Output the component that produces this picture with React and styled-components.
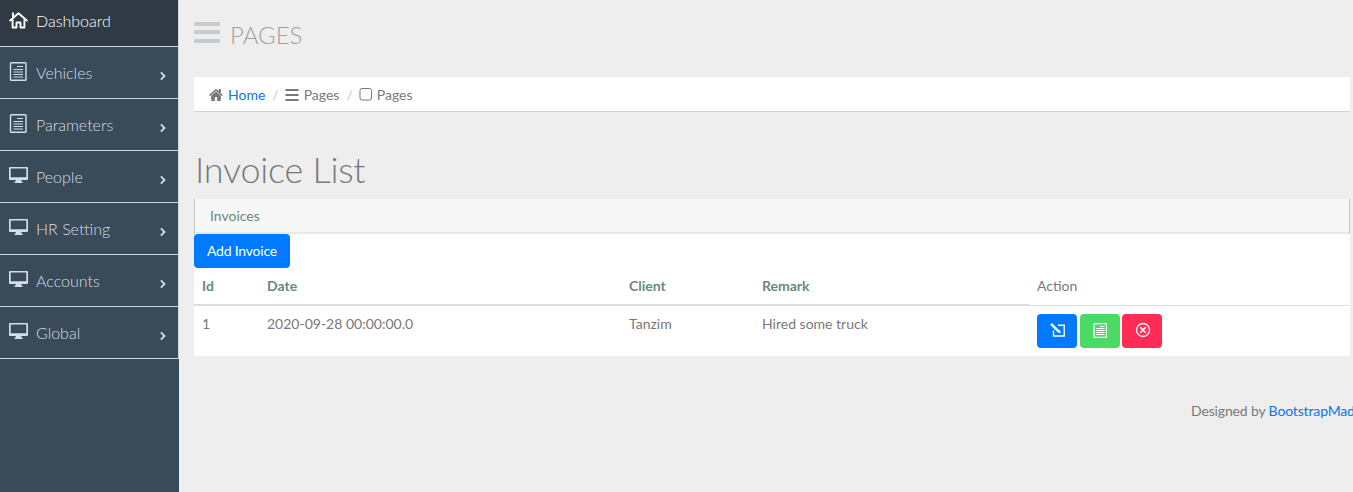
import React from "react";
import styled, { createGlobalStyle } from "styled-components";

const GlobalStyle = createGlobalStyle`
  *, *::before, *::after { box-sizing: border-box; }
  html, body { margin: 0; height: 100%; overflow: hidden; }
  body {
    background: #eeeeee;
    color: #797979;
    font: 400 14px/21px Lato, "Liberation Sans", sans-serif;
  }
  svg { display: block; flex: none; }
`;

const Page = styled.div`
  display: flex;
  width: 1353px;
  height: 492px;
  overflow: hidden;
`;

const Sidebar = styled.nav`
  flex: none;
  width: 179px;
  background: #394a59;
`;

const Menu = styled.ul`
  list-style: none;
  margin: 0;
  padding: 0;
  border-right: 1px solid #d7d7d7;
`;

const MenuItem = styled.li`
  display: flex;
  align-items: center;
  height: ${(p) => (p.$active ? 47 : 52)}px;
  padding: 0 11px ${(p) => (p.$active ? 5 : 0)}px 9px;
  border-bottom: 1px solid #d7d7d7;
  background: ${(p) => (p.$active ? "#2f3a45" : "transparent")};
  color: ${(p) => (p.$active ? "#ffffff" : "#d3dee8")};
  font-size: 16px;
  font-weight: 300;
`;

const MenuIcon = styled.span`
  width: 27px;
  padding-bottom: ${(p) => (p.$active ? 1 : 3)}px;
`;

const MenuArrow = styled.span`
  margin-left: auto;
  padding-top: 7px;
`;

const Main = styled.main`
  flex: none;
  width: 1171px;
  padding: 0 0 0 15px;
`;

const PageHeader = styled.h3`
  display: flex;
  align-items: flex-start;
  gap: 10px;
  height: 77px;
  margin: 0;
  padding-top: 20px;
  color: #a0a0a0;
  font-size: 24px;
  line-height: 30px;
  font-weight: 300;
`;

const Bars = styled.svg`
  margin-top: 2px;
`;

const Breadcrumb = styled.ol`
  display: flex;
  align-items: center;
  height: 35px;
  margin: 0;
  padding: 1px 15px 0;
  list-style: none;
  background: #ffffff;
  border-bottom: 1px solid #d2d2d2;
`;

const Crumb = styled.li`
  display: flex;
  align-items: center;
  gap: 5px;

  & + &::before {
    content: "/";
    margin: 0 1px 0 7px;
    color: #c8c8c8;
  }
`;

const Link = styled.a`
  color: #0f74e6;
  text-decoration: none;
`;

const Title = styled.h1`
  margin: 35px 0 8px;
  height: 44px;
  padding-left: 1px;
  color: #797979;
  font-size: 36px;
  line-height: 44px;
  font-weight: 300;
  letter-spacing: -0.25px;
`;

const Panel = styled.section`
  height: 157px;
  background: #ffffff;
`;

const PanelHeading = styled.header`
  height: 35px;
  padding: 6px 15px 0;
  color: #688a7e;
  background: #f7f7f7;
  border: solid #c7cbd0;
  border-width: 0 1px;
  box-shadow: inset 0 -2px 0 #e9e9e9;
`;

const AddButton = styled.button`
  display: block;
  width: 96px;
  height: 34px;
  padding: 0 0 2px;
  border: 0;
  border-radius: 4px;
  background: #007aff;
  color: #ffffff;
  font: inherit;
  letter-spacing: -0.2px;
`;

const Table = styled.table`
  width: 1156px;
  table-layout: fixed;
  border-collapse: separate;
  border-spacing: 0;
`;

const HeadCell = styled.th`
  height: 38px;
  padding: 0 8px 1px;
  border-bottom: 2px solid #dddddd;
  color: #688a7e;
  text-align: left;
  font-weight: 700;
`;

const ActionHead = styled.td`
  height: 38px;
  padding: 0 8px 2px;
  border-bottom: 1px solid #dddddd;
`;

const Cell = styled.td`
  height: 50px;
  padding: ${(p) => (p.$actions ? 8 : 7)}px 8px 0;
  vertical-align: top;
`;

const Actions = styled.div`
  display: flex;
  gap: 2.5px;
`;

const ActionButton = styled.button`
  display: flex;
  align-items: center;
  justify-content: center;
  width: 40px;
  height: 34px;
  padding: 0 0 2px 1px;
  border: 0;
  border-radius: 4px;
  background: ${(p) => p.$color};
  color: #ffffff;
`;

const Footer = styled.footer`
  width: 210px;
  margin: 44px 0 0 997px;
  white-space: nowrap;
  letter-spacing: -0.15px;
`;

const HouseIcon = () => (
  <svg width="19" height="18" viewBox="0 0 19 18" fill="none" stroke="currentColor" strokeWidth="1.9" strokeLinejoin="round" strokeLinecap="round">
    <path d="M1.2 9.5 9.5 2.2 17.8 9.5M4 7V2.2M3.6 9V16.5H7.5V11.500h4v5h3.900V9" />
  </svg>
);

const DocumentIcon = () => (
  <svg width="19" height="19" viewBox="0 0 19 19" fill="none" stroke="currentColor" strokeWidth="1.400">
    <rect x="1.500" y="0.700" width="15.500" height="17.600" rx="0.8" />
    <path d="M8 4.500h6M4.500 7.500h9.500M4.500 10h9.500M4.500 12.500h9.500M4.500 15h9.500" strokeWidth="1.200" />
  </svg>
);

const DetailsIcon = () => (
  <svg width="15" height="15" viewBox="0 0 15 15" fill="none" stroke="currentColor" strokeWidth="1.200">
    <rect x="1.100" y="0.600" width="12.300" height="13.800" rx="0.6" />
    <path d="M7 3.500h4.500M3 5.500h8.500M3 7.500h8.500M3 9.500h8.500M3 11.500h8.500" strokeWidth="1" />
  </svg>
);

const DesktopIcon = () => (
  <svg width="19" height="17" viewBox="0 0 19 17" fill="currentColor">
    <path fillRule="evenodd" d="M1 0h17a1 1 0 0 1 1 1v11a1 1 0 0 1-1 1h-5.7v1.5h1.2V16H5.5v-1.5h1.2V13H1a1 1 0 0 1-1-1V1a1 1 0 0 1 1-1zm.7 1.6v8.6h15.6V1.6z" />
  </svg>
);

const ArrowIcon = () => (
  <svg width="8" height="10" viewBox="0 0 8 10" fill="none" stroke="currentColor" strokeWidth="1.8">
    <path d="M1.900 1.400 5.500 5 1.900 8.600" />
  </svg>
);

const HomeIcon = () => (
  <svg width="14" height="12" viewBox="64 248 1664 1296" preserveAspectRatio="none" fill="currentColor">
    <path d="M1472 992v480q0 26-19 45t-45 19h-384v-384H768v384H384q-26 0-45-19t-19-45V992q0-1 .5-3t.5-3l575-474 575 474q1 2 1 6zm223-69-62 74q-8 9-21 11h-3q-13 0-21-7L896 424l-692 577q-12 8-24 7-13-2-21-11l-62-74q-8-10-7-23.500t11-21.500l719-599q32-26 76-26t76 26l244 204V288q0-14 9-23t23-9h192q14 0 23 9t9 23v408l219 182q10 8 11 21.500t-7 23.500z" />
  </svg>
);

const ListBarsIcon = () => (
  <svg width="14" height="12" viewBox="0 0 14 12" fill="currentColor">
    <path d="M.5 0h13v2H.5zM.5 5h13v2H.5zM.5 10h13v2H.5z" />
  </svg>
);

const SquareIcon = () => (
  <svg width="13" height="14" viewBox="0 0 13 14" fill="none" stroke="currentColor">
    <rect x="1" y="0.500" width="11.500" height="11.500" rx="2" />
  </svg>
);

const EditIcon = () => (
  <svg width="16" height="16" viewBox="0 0 16 16" fill="none" stroke="currentColor" strokeWidth="1.400">
    <path d="M8 3.300h6.200v10.700H3.500V8.500" />
    <path d="m1.100 1.900 7.400 7.400" strokeWidth="2.500" />
    <path d="m7.500 10 3 .900-.900-3z" fill="currentColor" strokeWidth=".5" />
  </svg>
);

const CloseIcon = () => (
  <svg width="16" height="16" viewBox="0 0 16 16" fill="none" stroke="currentColor" strokeWidth="1.300">
    <circle cx="8" cy="8" r="6.500" />
    <path d="m5.300 5.300 5.400 5.400m0-5.400-5.400 5.400" strokeWidth="1.600" />
  </svg>
);

const menu = [
  ["Vehicles", DocumentIcon],
  ["Parameters", DocumentIcon],
  ["People", DesktopIcon],
  ["HR Setting", DesktopIcon],
  ["Accounts", DesktopIcon],
  ["Global", DesktopIcon],
];

export default function App() {
  return (
    <Page>
      <GlobalStyle />
      <Sidebar>
        <Menu>
          <MenuItem $active>
            <MenuIcon $active><HouseIcon /></MenuIcon>
            Dashboard
          </MenuItem>
          {menu.map(([label, Icon]) => (
            <MenuItem key={label}>
              <MenuIcon><Icon /></MenuIcon>
              {label}
              <MenuArrow><ArrowIcon /></MenuArrow>
            </MenuItem>
          ))}
        </Menu>
      </Sidebar>
      <Main>
        <PageHeader>
          <Bars width="26" height="22" viewBox="0 0 26 22" fill="#c7cbd0">
            <rect width="26" height="4" rx="0.8" />
            <rect y="8" width="26" height="4" rx="0.8" />
            <rect y="17" width="26" height="4" rx="0.8" />
          </Bars>
          PAGES
        </PageHeader>
        <Breadcrumb>
          <Crumb><HomeIcon /><Link href="#">Home</Link></Crumb>
          <Crumb><ListBarsIcon />Pages</Crumb>
          <Crumb><SquareIcon />Pages</Crumb>
        </Breadcrumb>
        <Title>Invoice List</Title>
        <Panel>
          <PanelHeading>Invoices</PanelHeading>
          <AddButton>Add Invoice</AddButton>
          <Table>
            <colgroup>
              <col width="65" />
              <col width="362" />
              <col width="133" />
              <col width="275" />
              <col />
            </colgroup>
            <thead>
              <tr>
                <HeadCell>Id</HeadCell>
                <HeadCell>Date</HeadCell>
                <HeadCell>Client</HeadCell>
                <HeadCell>Remark</HeadCell>
                <ActionHead>Action</ActionHead>
              </tr>
            </thead>
            <tbody>
              <tr>
                <Cell>1</Cell>
                <Cell>2020-09-28 00:00:00.0</Cell>
                <Cell>Tanzim</Cell>
                <Cell>Hired some truck</Cell>
                <Cell $actions>
                  <Actions>
                    <ActionButton $color="#007aff" aria-label="Edit"><EditIcon /></ActionButton>
                    <ActionButton $color="#4cd964" aria-label="Details"><DetailsIcon /></ActionButton>
                    <ActionButton $color="#ff2d55" aria-label="Delete"><CloseIcon /></ActionButton>
                  </Actions>
                </Cell>
              </tr>
            </tbody>
          </Table>
        </Panel>
        <Footer>Designed by <Link href="#">BootstrapMade</Link></Footer>
      </Main>
    </Page>
  );
}
